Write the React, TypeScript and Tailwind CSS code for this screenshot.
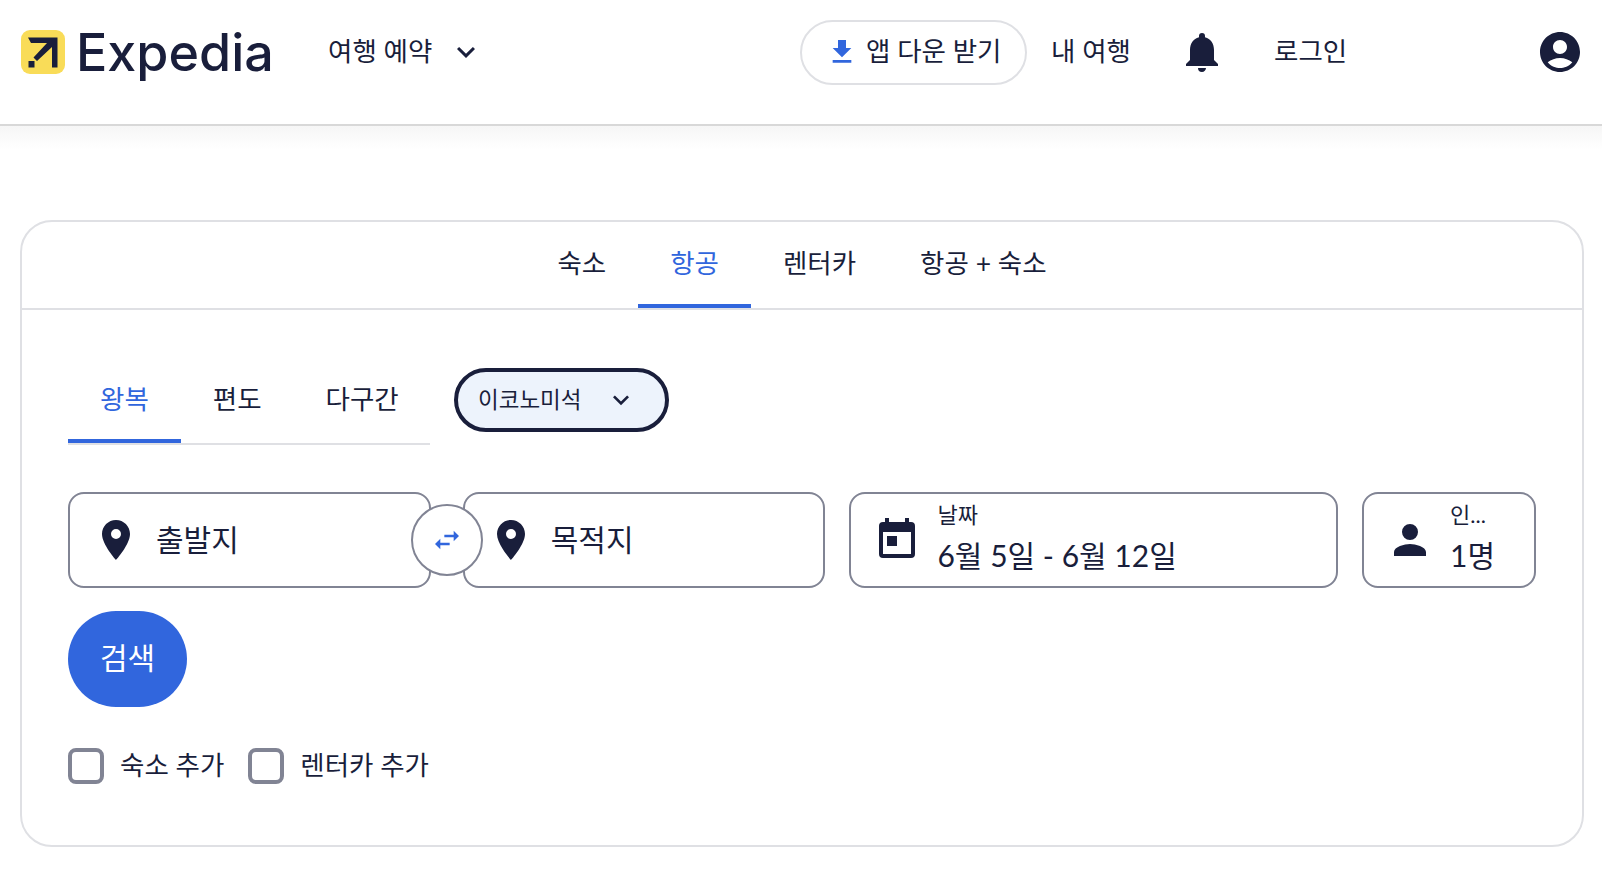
import React from "react";

const P = {
  pin: "M12 2C8.13 2 5 5.13 5 9c0 5.25 7 13 7 13s7-7.75 7-13c0-3.87-3.13-7-7-7zm0 9.5a2.5 2.5 0 0 1 0-5 2.5 2.5 0 0 1 0 5z",
  cal: "M19 3h-1V1h-2v2H8V1H6v2H5a2 2 0 0 0-2 2v14a2 2 0 0 0 2 2h14a2 2 0 0 0 2-2V5a2 2 0 0 0-2-2zm0 16H5V8h14zM7 10h5v5H7z",
  person: "M12 12a4 4 0 1 0 0-8 4 4 0 0 0 0 8zm0 2c-2.67 0-8 1.34-8 4v2h16v-2c0-2.66-5.33-4-8-4z",
  bell: "M12 22c1.1 0 2-.9 2-2h-4a2 2 0 0 0 2 2zm6-6v-5c0-3.07-1.63-5.64-4.5-6.32V4a1.5 1.5 0 0 0-3 0v.68C7.64 5.36 6 7.92 6 11v5l-2 2v1h16v-1l-2-2z",
  account: "M12 2C6.48 2 2 6.48 2 12s4.48 10 10 10 10-4.48 10-10S17.52 2 12 2zm0 4c1.93 0 3.5 1.57 3.5 3.5S13.93 13 12 13s-3.5-1.57-3.5-3.5S10.07 6 12 6zm0 14c-2.03 0-4.43-.82-6.14-2.88C7.55 15.8 9.68 15 12 15s4.45.8 6.14 2.12C16.43 19.18 14.03 20 12 20z",
  download: "M19 9h-4V3H9v6H5l7 7 7-7zM5 18v2h14v-2H5z",
  swap: "M6.99 11 3 15l3.99 4v-3H14v-2H6.99v-3zM21 9l-3.99-4v3H10v2h7.01v3L21 9z",
  chevron: "M16.59 8.59 12 13.17 7.41 8.59 6 10l6 6 6-6z",
};

function Icon({ d, className }: { d: string; className: string }) {
  return (
    <svg viewBox="0 0 24 24" fill="currentColor" fillRule="evenodd" className={className}>
      <path d={d} />
    </svg>
  );
}

function Logo() {
  return (
    <svg viewBox="0 0 44 44" className="w-[44px] h-[44px] shrink-0">
      <rect width="44" height="44" rx="9" fill="#f9dc58" />
      <path d="M7 7.5H36.5V37.5H31V17L16 31L12.5 27.5L26 13H10Z" fill="#191e3b" />
      <rect x="7.5" y="31" width="6" height="6.5" fill="#191e3b" />
    </svg>
  );
}

function Field({ icon, text, className }: { icon: string; text: string; className: string }) {
  return (
    <div className={`h-[96px] border-2 border-[#818494] rounded-[16px] bg-white flex items-center pl-[22px] gap-[16px] ${className}`}>
      <Icon d={icon} className="w-[48px] h-[48px] shrink-0" />
      <span className="text-[30px] pb-[2px]">{text}</span>
    </div>
  );
}

function Labeled({ icon, label, value, className }: { icon: string; label: string; value: string; className: string }) {
  return (
    <div className={`h-[96px] border-2 border-[#818494] rounded-[16px] bg-white flex items-center pl-[22px] gap-[16px] ${className}`}>
      <Icon d={icon} className="w-[48px] h-[48px] shrink-0" />
      <div className="flex flex-col pb-[5px]">
        <span className="text-[22px] leading-[28px]">{label}</span>
        <span className="text-[30px] leading-[40px] mt-[6px]">{value}</span>
      </div>
    </div>
  );
}

export default function App() {
  return (
    <div className="bg-white text-[#191e3b] font-['Lato','Noto_Sans_CJK_KR',sans-serif] text-[26.5px] min-h-[872px]">
      <header className="h-[126px] border-b-2 border-[#d8d8d8] flex items-center pl-[21px] pb-[20px] whitespace-nowrap">
        <Logo />
        <span className="ml-[11px] w-[197px] text-[52px] leading-none font-medium font-['Inter',sans-serif] pt-[2px]">Expedia</span>
        <span className="ml-[55px] w-[120px]">여행 예약</span>
        <Icon d={P.chevron} className="w-[36px] h-[36px]" />
        <div className="ml-[316px] h-[65px] w-[227px] border-2 border-[#dfe0e4] rounded-full flex items-center pl-[24px] gap-[8px]">
          <Icon d={P.download} className="w-[32px] h-[32px] text-[#3166dd]" />
          <span>앱 다운 받기</span>
        </div>
        <span className="ml-[24px] w-[79px]">내 여행</span>
        <Icon d={P.bell} className="w-[48px] h-[48px] ml-[48px]" />
        <span className="ml-[48px] w-[72px]">로그인</span>
        <Icon d={P.account} className="w-[48px] h-[48px] ml-[190px]" />
      </header>
      <div className="h-[94px] bg-gradient-to-b from-[#f6f6f6] to-white to-[25%]" />
      <main className="ml-[20px] w-[1564px] h-[627px] border-2 border-[#dfe0e4] rounded-[32px]">
        <nav className="h-[88px] border-b-2 border-[#dfe0e4] flex justify-center whitespace-nowrap">
          {["숙소", "항공", "렌터카", "항공 + 숙소"].map((t) => (
            <div
              key={t}
              className={
                t === "항공"
                  ? "h-[86px] px-[32px] flex items-center pt-[2px] border-b-4 border-[#3166dd] text-[#3166dd]"
                  : "h-[86px] px-[32px] flex items-center pt-[2px] border-b-4 border-transparent"
              }
            >
              {t}
            </div>
          ))}
        </nav>
        <div className="px-[46px] pt-[58px]">
          <div className="flex items-start">
            <div className="flex w-[362px] h-[77px] border-b-2 border-[#dfe0e4] whitespace-nowrap">
              {["왕복", "편도", "다구간"].map((t, i) => (
                <div
                  key={t}
                  className={
                    i === 0
                      ? "h-[75px] px-[32px] flex items-center shrink-0 pb-[8px] border-b-4 border-[#3166dd] text-[#3166dd]"
                      : "h-[75px] px-[32px] flex items-center shrink-0 pb-[8px] border-b-4 border-transparent"
                  }
                >
                  {t}
                </div>
              ))}
            </div>
            <div className="ml-[24px] w-[215px] h-[64px] rounded-full border-4 border-[#191e3b] bg-[#edf3fc] flex items-center pl-[20px] gap-[23px]">
              <span className="text-[22.5px]">이코노미석</span>
              <Icon d={P.chevron} className="w-[32px] h-[32px]" />
            </div>
          </div>
          <div className="flex mt-[47px] items-center">
            <Field icon={P.pin} text="출발지" className="w-[363px]" />
            <div className="relative z-10 w-0 h-0">
              <div className="absolute left-[-20px] top-[-36px] w-[72px] h-[72px] rounded-full border-2 border-[#818494] bg-white flex items-center justify-center">
                <Icon d={P.swap} className="w-[32px] h-[32px] text-[#3166dd]" />
              </div>
            </div>
            <Field icon={P.pin} text="목적지" className="w-[363px] ml-[32px]" />
            <Labeled icon={P.cal} label="날짜" value="6월 5일 - 6월 12일" className="w-[489px] ml-[24px]" />
            <Labeled icon={P.person} label="인..." value="1명" className="w-[174px] ml-[24px]" />
          </div>
          <button className="mt-[23px] w-[119px] h-[96px] pb-[3px] rounded-[48px] bg-[#3166dd] text-white text-[30px] block">검색</button>
          <div className="flex items-center mt-[39px]">
            <span className="w-[36px] h-[36px] border-4 border-[#818494] rounded-[8px]" />
            <span className="ml-[16px]">숙소 추가</span>
            <span className="ml-[24px] w-[36px] h-[36px] border-4 border-[#818494] rounded-[8px]" />
            <span className="ml-[16px]">렌터카 추가</span>
          </div>
        </div>
      </main>
    </div>
  );
}
